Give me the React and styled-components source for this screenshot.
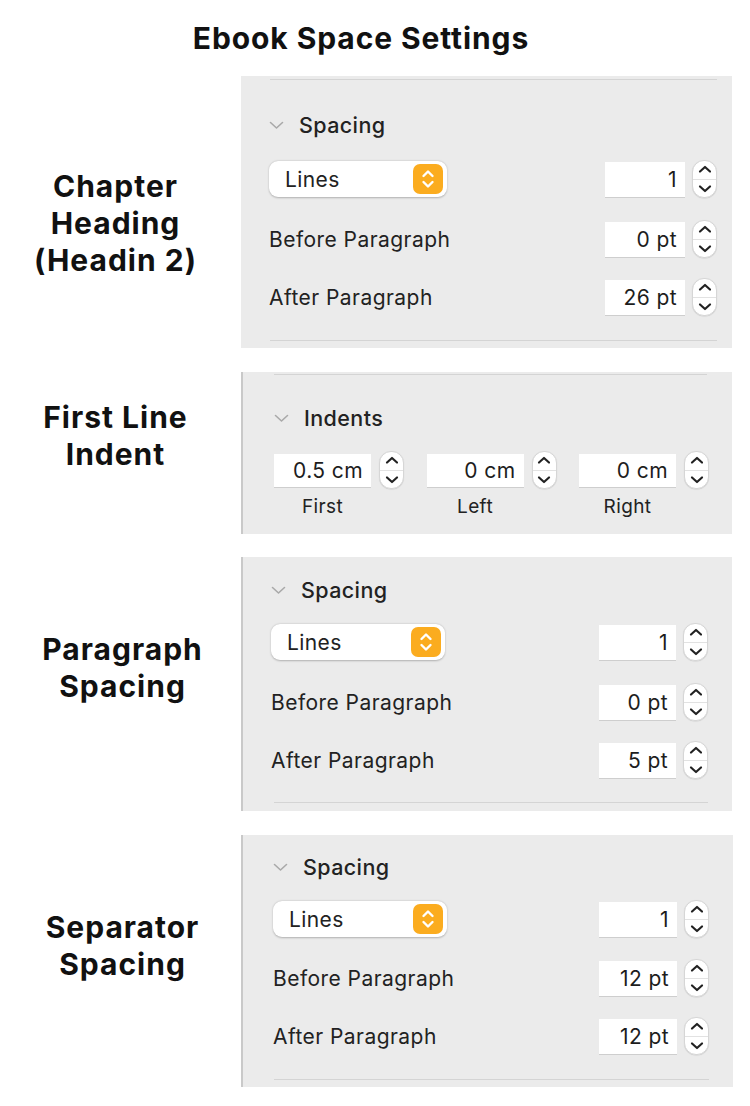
import React from "react";
import styled, { createGlobalStyle } from "styled-components";

const GlobalStyle = createGlobalStyle`
  * { box-sizing: border-box; }
  body {
    margin: 0;
    background: #ffffff;
    font-family: "Inter", "Liberation Sans", sans-serif;
    color: #1d1d1d;
  }
`;

const Page = styled.div`
  width: 750px;
  padding-top: 18px;
  display: flex;
  flex-direction: column;
`;

const Title = styled.h1`
  margin: 0 0 18px 0;
  padding-right: 28px;
  text-align: center;
  font-family: "Inter", sans-serif;
  font-size: 30px;
  font-weight: 700;
  letter-spacing: 0.9px;
  line-height: 40px;
  color: #111;
`;

const Section = styled.div`
  display: flex;
  align-items: center;
  margin-bottom: ${(p) => p.gap || 24}px;
`;

const SideLabel = styled.div`
  width: 241px;
  flex-shrink: 0;
  padding-right: ${(p) => (p.wide ? 0 : 10)}px;
  padding-left: ${(p) => (p.wide ? 4 : 0)}px;
  text-align: center;
  font-family: "Inter", sans-serif;
  font-size: 30px;
  font-weight: 700;
  line-height: 37px;
  letter-spacing: 1px;
  color: #111;
  margin-top: ${(p) => p.shift || 0}px;
`;

const Panel = styled.div`
  width: ${(p) => p.w || 491}px;
  height: ${(p) => p.h}px;
  background: #ebebeb;
  border-left: ${(p) => (p.edge ? "2px solid #c9c9c9" : "none")};
  padding: ${(p) => p.pad};
  display: flex;
  flex-direction: column;
`;

const Rule = styled.div`
  height: 1px;
  background: #d4d4d4;
  margin: ${(p) => p.m};
`;

const Header = styled.div`
  display: flex;
  align-items: center;
  height: 30px;
  gap: 15px;
  font-size: 21.5px;
  font-weight: 500;
  letter-spacing: 0.4px;
  color: #222;
  margin: ${(p) => p.m};
`;

const Row = styled.div`
  display: flex;
  align-items: center;
  justify-content: space-between;
  height: 36px;
  margin-top: ${(p) => p.mt || 0}px;
`;

const RowLabel = styled.span`
  font-size: 21px;
  color: #222;
  letter-spacing: 0.45px;
`;

const Select = styled.div`
  width: ${(p) => p.w || 178}px;
  height: 36px;
  background: #fff;
  border-radius: 9px;
  box-shadow: 0 0.5px 2px rgba(0, 0, 0, 0.25);
  display: flex;
  align-items: center;
  justify-content: space-between;
  padding: 0 4px 0 16px;
  font-size: 21px;
  letter-spacing: 0.4px;
  color: #222;
`;

const SelectKnob = styled.div`
  width: 30px;
  height: 30px;
  border-radius: 7px;
  background: #fbac1f;
  display: flex;
  align-items: center;
  justify-content: center;
`;

const NumberGroup = styled.div`
  display: flex;
  align-items: center;
  gap: ${(p) => p.gap || 7}px;
`;

const Field = styled.div`
  width: ${(p) => p.w || 80}px;
  height: ${(p) => p.h || 35}px;
  background: #fff;
  box-shadow: 0 1px 0 rgba(0, 0, 0, 0.12);
  display: flex;
  align-items: center;
  justify-content: flex-end;
  padding-right: 8px;
  font-size: 21px;
  letter-spacing: 0.4px;
  color: #1d1d1d;
`;

const Stepper = styled.div`
  width: 25px;
  height: 38px;
  border-radius: 12px;
  background: #fff;
  border: 1px solid #d6d6d6;
  box-shadow: 0 0.5px 1px rgba(0, 0, 0, 0.12);
  display: flex;
  flex-direction: column;
  overflow: hidden;
`;

const StepHalf = styled.div`
  flex: 1;
  display: flex;
  align-items: center;
  justify-content: center;
  border-top: ${(p) => (p.low ? "1px solid #e2e2e2" : "none")};
`;

const IndentRow = styled.div`
  display: flex;
  gap: 22.5px;
  margin-top: 18px;
`;

const IndentItem = styled.div`
  display: flex;
  flex-direction: column;
`;

const IndentCaption = styled.div`
  width: 97px;
  text-align: center;
  font-size: 19px;
  letter-spacing: 0.4px;
  color: #222;
  margin-top: 6px;
`;

const Chevron = () => (
  <svg width="15" height="10" viewBox="0 0 15 10">
    <path d="M1.5 2.5 L7.5 8 L13.5 2.5" fill="none" stroke="#a9a9a9" strokeWidth="1.6" strokeLinecap="round" strokeLinejoin="round" />
  </svg>
);

const UpDown = ({ color = "#fff", w = 2.4 }) => (
  <svg width="16" height="22" viewBox="0 0 16 22">
    <path d="M3.5 8 L8 3.5 L12.5 8" fill="none" stroke={color} strokeWidth={w} strokeLinecap="round" strokeLinejoin="round" />
    <path d="M3.5 14 L8 18.5 L12.5 14" fill="none" stroke={color} strokeWidth={w} strokeLinecap="round" strokeLinejoin="round" />
  </svg>
);

const Caret = ({ down }) => (
  <svg width="14" height="9" viewBox="0 0 14 9">
    <path
      d={down ? "M2 2.5 L7 7 L12 2.5" : "M2 6.5 L7 2 L12 6.5"}
      fill="none"
      stroke="#222"
      strokeWidth="2.2"
      strokeLinecap="round"
      strokeLinejoin="round"
    />
  </svg>
);

const NumberInput = ({ value, w, h, gap }) => (
  <NumberGroup gap={gap}>
    <Field w={w} h={h}>{value}</Field>
    <Stepper>
      <StepHalf><Caret /></StepHalf>
      <StepHalf low><Caret down /></StepHalf>
    </Stepper>
  </NumberGroup>
);

const SpacingBody = ({ before, after, selectW, fieldW, headerM, gaps }) => (
  <>
    <Header m={headerM}>
      <Chevron />
      <span>Spacing</span>
    </Header>
    <Row mt={gaps[0]}>
      <Select w={selectW}>
        <span>Lines</span>
        <SelectKnob><UpDown /></SelectKnob>
      </Select>
      <NumberInput value="1" w={fieldW} />
    </Row>
    <Row mt={gaps[1]}>
      <RowLabel>Before Paragraph</RowLabel>
      <NumberInput value={before} w={fieldW} />
    </Row>
    <Row mt={gaps[2]}>
      <RowLabel>After Paragraph</RowLabel>
      <NumberInput value={after} w={fieldW} />
    </Row>
  </>
);

const indents = [
  { value: "0.5 cm", label: "First" },
  { value: "0 cm", label: "Left" },
  { value: "0 cm", label: "Right" },
];

export default function App() {
  return (
    <Page>
      <GlobalStyle />
      <Title>Ebook Space Settings</Title>

      <Section>
        <SideLabel shift={22}>
          Chapter
          <br />
          Heading
          <br />
          (Headin 2)
        </SideLabel>
        <Panel h={272} pad="3px 15px 0 28px">
          <Rule m="0 0 0 1px" />
          <SpacingBody
            before="0 pt"
            after="26 pt"
            selectW={178}
            fieldW={80}
            headerM="30px 0 0 0"
            gaps={[21, 24, 22]}
          />
          <Rule m="25px 0 0 1px" />
        </Panel>
      </Section>

      <Section gap={23}>
        <SideLabel shift={-34}>
          First Line
          <br />
          Indent
        </SideLabel>
        <Panel h={162} edge pad="2px 25px 0 31px">
          <Rule m="0" />
          <Header m="28px 0 0 0">
            <Chevron />
            <span>Indents</span>
          </Header>
          <IndentRow>
            {indents.map((it, i) => (
              <IndentItem key={i}>
                <NumberInput value={it.value} w={97} h={33} gap={8} />
                <IndentCaption>{it.label}</IndentCaption>
              </IndentItem>
            ))}
          </IndentRow>
        </Panel>
      </Section>

      <Section>
        <SideLabel shift={-32} wide>
          Paragraph
          <br />
          Spacing
        </SideLabel>
        <Panel h={254} edge pad="18px 24px 0 28px">
          <SpacingBody
            before="0 pt"
            after="5 pt"
            selectW={174}
            fieldW={77}
            headerM="0"
            gaps={[19, 24, 22]}
          />
          <Rule m="24px 0 0 3px" />
        </Panel>
      </Section>

      <Section>
        <SideLabel shift={-30} wide>
          Separator
          <br />
          Spacing
        </SideLabel>
        <Panel h={252} w={492} edge pad="17px 24px 0 30px">
          <SpacingBody
            before="12 pt"
            after="12 pt"
            selectW={174}
            fieldW={78}
            headerM="0"
            gaps={[19, 23, 22]}
          />
          <Rule m="25px 0 0 1px" />
        </Panel>
      </Section>
    </Page>
  );
}
